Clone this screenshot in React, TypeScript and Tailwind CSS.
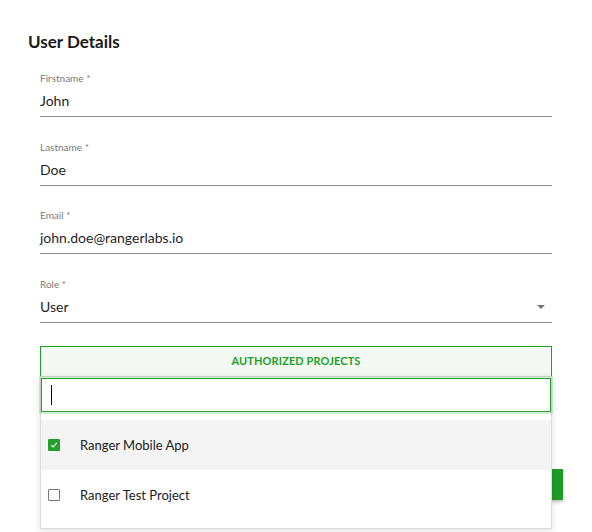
import React from "react";

function Field({ label, value, select }: { label: string; value: string; select?: boolean }) {
  return (
    <div className="flex flex-col border-b border-[#8c8c8c]">
      <div className="text-[10px] leading-[12px] text-[#7a7a7a]">{label}</div>
      <div className="mt-[7px] pb-[5px] flex items-center justify-between text-[14px] leading-[20px] text-[#1f1f1f]">
        <span>{value}</span>
        {select && (
          <svg width="8" height="4" viewBox="0 0 8 4" className="mr-[7px]">
            <path d="M0 0 L8 0 L4 4 Z" fill="#757575" />
          </svg>
        )}
      </div>
    </div>
  );
}

export default function App() {
  return (
    <div
      className="relative w-[592px] h-[532px] bg-white overflow-hidden"
      style={{ fontFamily: "Lato, 'Noto Sans', sans-serif" }}
    >
      <div className="pt-[32px] px-[28px]">
        <h1 className="text-[17px] leading-[20px] font-bold text-[#1a1a1a]">User Details</h1>
      </div>
      <div className="ml-[40px] w-[512px] mt-[20px] flex flex-col gap-[23.5px]">
        <Field label="Firstname *" value="John" />
        <Field label="Lastname *" value="Doe" />
        <Field label="Email *" value="john.doe@rangerlabs.io" />
        <Field label="Role *" value="User" select />
      </div>
      <div className="ml-[40px] w-[512px] mt-[23px] h-[31px] border border-[#22a02a] bg-[#f5f9f4] flex items-center justify-center">
        <span className="text-[11px] font-bold text-[#22a02a] tracking-[0.1px]">AUTHORIZED PROJECTS</span>
      </div>
      <div className="ml-[40px] w-[523px] mt-[92px] flex justify-end">
        <div className="w-[120px] h-[31px] bg-[#1f9b27] shadow-[0_2px_3px_rgba(0,0,0,0.25)]" />
      </div>

      <div className="absolute left-[40px] top-[376px] w-[512px] h-[153px] bg-white border border-[#dcdcdc] shadow-[0_2px_8px_rgba(0,0,0,0.12)] flex flex-col">
        <div className="mt-[1px] h-[34px] border border-[#22a02a] shadow-[0_0_0_2px_rgba(34,160,42,0.18)] flex items-center pl-[9px]">
          <div className="w-[1px] h-[20px] bg-black" />
        </div>
        <div className="mt-[8px] h-[50px] bg-[#f4f4f4] flex items-center pl-[7px]">
          <div className="w-[12px] h-[12px] bg-[#22a02a] rounded-[1px] flex items-center justify-center">
            <svg width="8" height="8" viewBox="0 0 8 8">
              <path d="M1.2 4.2 L3.2 6 L6.8 1.8" stroke="white" strokeWidth="1.2" fill="none" />
            </svg>
          </div>
          <span className="ml-[20px] text-[13px] leading-[16px] text-[#222]">Ranger Mobile App</span>
        </div>
        <div className="h-[50px] flex items-center pl-[7px]">
          <div className="w-[12px] h-[12px] border border-[#777] rounded-[1px]" />
          <span className="ml-[20px] text-[13px] leading-[16px] text-[#222]">Ranger Test Project</span>
        </div>
      </div>
    </div>
  );
}
